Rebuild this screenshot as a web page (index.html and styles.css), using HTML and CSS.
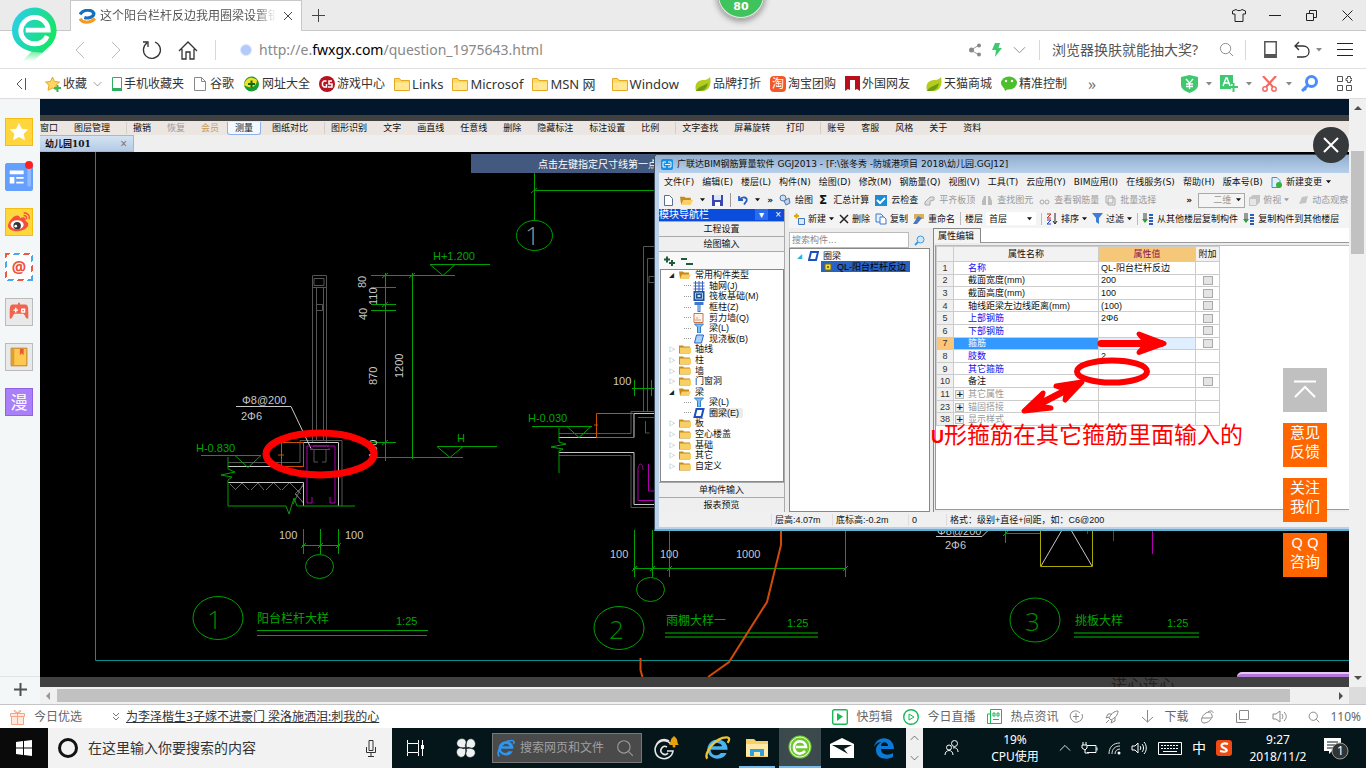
FILE: index.html
```html
<!DOCTYPE html>
<html lang="zh-CN">
<head>
    <meta charset="UTF-8">
    <meta name="viewport" content="width=device-width, initial-scale=1.0">
    <title>这个阳台栏杆反边我用圈梁设置钢筋</title>
    <link rel="stylesheet" href="styles.css">
</head>
<body>
    <!-- shared icons -->
    <svg class="defs" aria-hidden="true">
        <symbol id="i-caret" viewBox="0 0 6 4"><path d="M0 0h6L3 3.500z" fill="currentColor"/></symbol>
        <symbol id="i-chev" viewBox="0 0 14 8"><path d="M1 1l6 6 6-6" fill="none" stroke="currentColor"/></symbol>
        <symbol id="i-mag" viewBox="0 0 16 16"><circle cx="7" cy="7" r="5.500" fill="none" stroke="currentColor"/><path d="M11 11l4 4" stroke="currentColor"/></symbol>
        <symbol id="i-folder" viewBox="0 0 16 14"><path d="M.5 1.500h5l1.500 2h8.500v10H.5z" fill="#ffd75e" stroke="#e5a822"/><path d="M1 5.500h14v7.500H1z" fill="#ffe793"/></symbol>
        <symbol id="i-leaf" viewBox="0 0 16 16"><path d="M1 15C-1 7 3 4 9 4c3 0 5-2 6-3 2 9-2 14-8 14z" fill="#b5cc1e"/><path d="M1 15c3-5 8-5 12-8-1 6-5 8-9 8z" fill="#6b9c14"/></symbol>
        <symbol id="i-fold" viewBox="0 0 12 9"><path d="M0 1h4l1 1h6v7H0z" fill="#c98a1c"/><path d="M1 3h11v5.500H1z" fill="#f8cf63"/></symbol>
        <symbol id="i-foldopen" viewBox="0 0 12 9"><path d="M0 1h4l1 1h5v6H1z" fill="#c98a1c"/><path d="M3 4h9l-2 4.500H1z" fill="#f8d06a"/></symbol>
        <symbol id="i-grid" viewBox="0 0 11 10"><path d="M0 2h11M0 5h11M0 8h11M2 0v10M5.500 0v10M9 0v10" stroke="#3a62c0"/></symbol>
        <symbol id="i-raft" viewBox="0 0 11 10"><path d="M0 0h11v10H0z" fill="#1f4f96"/><path d="M2 2h7v6H2z" fill="none" stroke="#a9cdf5"/><path d="M4 4h3v2H4z" fill="#cfe6ff"/></symbol>
        <symbol id="i-col" viewBox="0 0 11 10"><path d="M1 0h9v3H7v7H4V3H1z" fill="#3d78cf"/><path d="M5 3h1v6H5z" fill="#bfe0ff"/></symbol>
        <symbol id="i-wall" viewBox="0 0 11 10"><path d="M.5.5h9v9h-9z" fill="#fff4ea" stroke="#c8754a"/><path d="M2 7h1M4 7h1M6 7h1M3 5h1" stroke="#a33"/></symbol>
        <symbol id="i-beam" viewBox="0 0 11 10"><path d="M1 1h9l-3 3v6H4V4z" fill="#7cc0f0" stroke="#2e7fd0"/></symbol>
        <symbol id="i-ring" viewBox="0 0 11 10"><path d="M3 1h7L8 9H1z" fill="#fff" stroke="#1d4fc0" stroke-width="2"/></symbol>
        <symbol id="i-slab" viewBox="0 0 11 10"><path d="M3 1h7L8 9H1z" fill="#a8d2fb" stroke="#2a62c8"/></symbol>
        <symbol id="i-copy" viewBox="0 0 12 12"><path d="M1 1h5l2 2v6H1z" fill="#e6f2ff" stroke="#3d78c8"/><path d="M5 4h4l2 2v5H5z" fill="#fff" stroke="#3d78c8"/></symbol>
        <symbol id="i-floor" viewBox="0 0 12 12"><path d="M1 0h4v7H1z" fill="#999"/><path d="M7 2h4M7 5h4M7 8h4M7 11h4" stroke="#2860c0" stroke-width="2"/><path d="M0 6h6l-3 4z" fill="#27a030"/></symbol>
        <symbol id="i-e" viewBox="0 0 24 24"><path d="M6 13h15c0-6-4-9-9-9-5 0-9 4-9 9 0 4 4 8 9 8 4 0 7-2 8-5h-5c-1 1-2 2-4 2-3 0-5-2-5-5zm0-3c1-2 3-3 5-3s5 1 5 3z" fill="currentColor"/></symbol>
    </svg>

    <header>
        <div class="titlebar">
            <div class="tab">
                <svg class="tab-ico" viewBox="0 0 16 14"><path d="M1 5C4 0 12 0 14 4c0 4-6 5-9 4" fill="none" stroke="#1470c0" stroke-width="3"/><path d="M1 9c2 4 9 5 14 0" fill="none" stroke="#f59a1e" stroke-width="3"/></svg>
                <span class="tab-title">这个阳台栏杆反边我用圈梁设置钢</span>
                <button class="plain tab-x" aria-label="关闭标签"><svg width="10" height="10" viewBox="0 0 10 10"><path d="M1 1l8 8M9 1L1 9" stroke="#444"/></svg></button>
            </div>
            <button class="plain newtab" aria-label="新标签"><svg width="13" height="13" viewBox="0 0 13 13"><path d="M6.500 0v13M0 6.500h13" stroke="#444"/></svg></button>
            <div class="winbtns">
                <button class="plain" aria-label="皮肤"><svg width="14" height="13" viewBox="0 0 14 13"><path d="M4 .5L.5 2v3H3v7.500h8V5h2.500V2L10 .5C9 2 5 2 4 .5z" fill="none" stroke="#222"/></svg></button>
                <button class="plain" aria-label="最小化"><svg width="12" height="12" viewBox="0 0 12 12"><path d="M0 6.500h12" stroke="#222"/></svg></button>
                <button class="plain" aria-label="还原"><svg width="11" height="11" viewBox="0 0 11 11"><path d="M.5 3.500h7v7h-7zM3.500 3V.5h7v7H8" fill="none" stroke="#222"/></svg></button>
                <button class="plain" aria-label="关闭"><svg width="11" height="11" viewBox="0 0 11 11"><path d="M.5.5l10 10M10.500.5l-10 10" stroke="#222"/></svg></button>
            </div>
        </div>

        <nav class="navbar">
            <button class="plain slot" aria-label="后退"><svg width="10" height="18" viewBox="0 0 10 18"><path d="M9 1L1 9l8 8" fill="none" stroke="#bbb"/></svg></button>
            <button class="plain slot" aria-label="前进"><svg width="10" height="18" viewBox="0 0 10 18"><path d="M1 1l8 8-8 8" fill="none" stroke="#bbb"/></svg></button>
            <button class="plain slot" aria-label="刷新"><svg width="20" height="20" viewBox="0 0 20 20"><path d="M5 3A8.500 8.500 0 1 0 13 2M1 2h5v5" fill="none" stroke="#333" stroke-width="1.300"/></svg></button>
            <button class="plain slot" aria-label="主页"><svg width="20" height="20" viewBox="0 0 20 20"><path d="M1 11l9-9 9 9M4 9v10h4v-7h4v7h4V9" fill="none" stroke="#333" stroke-width="1.300"/></svg></button>
            <i class="vsep"></i>
            <i class="site"></i>
            <span class="url">http://e.<b>fwxgx.com</b>/question_1975643.html</span>
            <div class="nav-right">
                <button class="plain s22" aria-label="分享"><svg width="12" height="14" viewBox="0 0 12 14"><path d="M10 2L2 7l8 5" fill="none" stroke="#999"/><circle cx="10" cy="2.500" r="2" fill="#888"/><circle cx="2.500" cy="7" r="2.500" fill="#888"/><circle cx="10" cy="11.500" r="2" fill="#888"/></svg></button>
                <button class="plain s22" aria-label="加速"><svg width="10" height="14" viewBox="0 0 10 14"><path d="M3 0h5L6.500 5H10L3 14l1-7H0z" fill="#3ec96f"/></svg></button>
                <button class="plain s22 gray" aria-label="更多"><svg width="13" height="8"><use href="#i-chev"/></svg></button>
                <i class="vsep"></i>
                <input class="hotsearch" type="text" value="浏览器换肤就能抽大奖?" aria-label="搜索">
                <button class="plain s28 gray" aria-label="搜索"><svg width="15" height="15"><use href="#i-mag"/></svg></button>
                <i class="vsep tight"></i>
                <button class="plain s36" aria-label="手机"><svg width="13" height="17" viewBox="0 0 13 17"><path d="M.8.8h11.400v15.400H.8z" fill="none" stroke="#555" stroke-width="1.500"/><path d="M1 13h11v3H1z" fill="#555"/></svg></button>
                <button class="plain s28" aria-label="撤销"><svg width="16" height="17" viewBox="0 0 16 17"><path d="M5 1L1 5l4 4M1 5h8c8 0 8 11 0 11H3" fill="none" stroke="#333" stroke-width="1.300"/></svg></button>
                <svg class="dd" width="6" height="4"><use href="#i-caret"/></svg>
                <button class="plain s36" aria-label="菜单"><svg width="16" height="13" viewBox="0 0 16 13"><path d="M0 .5h16M0 6.500h16M0 12.500h16" stroke="#222"/></svg></button>
            </div>
        </nav>

        <div class="bookmarks">
            <svg class="collapse" width="10" height="12" viewBox="0 0 10 12"><path d="M6 1L1 6l5 5M9.500 0v12" fill="none" stroke="#555"/></svg>
            <ul>
                <li class="fav"><a href="#"><svg width="16" height="16" viewBox="0 0 16 16"><path d="M7.500 1l2 4.500 5 .5-3.700 3.300 1 5L7.500 12 3 14.300l1-5L.5 6l5-.5z" fill="#ffd75e" stroke="#e5a822"/><path d="M9 12h7M12.500 9v7" stroke="#3cb85a" stroke-width="2"/></svg>收藏</a><svg class="dn" width="9" height="6"><use href="#i-chev"/></svg></li>
                <li><a href="#"><svg width="10" height="14" viewBox="0 0 10 14"><path d="M.5.5h9v13h-9z" fill="#fff" stroke="#2fae60"/><path d="M0 11h10v3H0z" fill="#2fae60"/></svg>手机收藏夹</a></li>
                <li><a href="#"><svg class="pg" width="12" height="14" viewBox="0 0 12 14"><path d="M.5.5h7l4 4v9H.5zM7.500.5v4h4" fill="#fff" stroke="#888"/></svg>谷歌</a></li>
                <li><a href="#"><svg width="17" height="16" viewBox="0 0 17 16"><circle cx="8.500" cy="8" r="7.500" fill="#1a9c34"/><path d="M1 9c2-8 8-9 13-5-1 8-6 9-13 5z" fill="#f2e028"/><path d="M5 8h7M8.500 4.500v7" stroke="#0c6a1c" stroke-width="2"/></svg>网址大全</a></li>
                <li><a href="#"><svg width="16" height="16" viewBox="0 0 16 16"><circle cx="8" cy="8" r="8" fill="#b6121f"/><path d="M7.500 5H5L3.500 6.500v3L5 11h2.500V8M13 5h-3v3h3v3h-4" fill="none" stroke="#fff" stroke-width="1.500"/></svg>游戏中心</a></li>
                <li class="en"><a href="#"><svg width="16" height="14"><use href="#i-folder"/></svg>Links</a></li>
                <li class="en"><a href="#"><svg width="16" height="14"><use href="#i-folder"/></svg>Microsof</a></li>
                <li class="en wide"><a href="#"><svg width="16" height="14"><use href="#i-folder"/></svg>MSN 网</a></li>
                <li class="en wide"><a href="#"><svg width="16" height="14"><use href="#i-folder"/></svg>Window</a></li>
                <li><a href="#"><svg width="16" height="16"><use href="#i-leaf"/></svg>品牌打折</a></li>
                <li><a href="#"><span class="tao">淘</span>淘宝团购</a></li>
                <li class="wide"><a href="#"><svg width="15" height="15" viewBox="0 0 15 15"><path d="M0 0h15v15l-3-2-2 1V4H5v10l-2-1-3 2z" fill="#b90f1c"/></svg>外国网友</a></li>
                <li><a href="#"><svg width="16" height="16"><use href="#i-leaf"/></svg>天猫商城</a></li>
                <li><a href="#"><svg width="16" height="15" viewBox="0 0 16 15"><ellipse cx="8" cy="7" rx="8" ry="6.500" fill="#4bbf2c"/><path d="M3 12l1 3 3-2z" fill="#4bbf2c"/><circle cx="5" cy="5" r="1.200" fill="#fff"/><circle cx="11" cy="5" r="1.200" fill="#fff"/></svg>精准控制</a></li>
            </ul>
            <span class="more">»</span>
            <div class="tools">
                <button class="plain s24" aria-label="网购先赔"><svg width="17" height="18" viewBox="0 0 17 18"><path d="M8.500 0L17 2v8c0 4-4 6-8.500 8C4 16 0 14 0 10V2z" fill="#3ec96f"/><path d="M5 4l3.500 4L12 4M8.500 8v6M5 9h7M5 11.500h7" fill="none" stroke="#fff" stroke-width="1.300"/></svg></button>
                <svg class="dd" width="6" height="4"><use href="#i-caret"/></svg>
                <button class="plain s24" aria-label="翻译"><svg width="18" height="17" viewBox="0 0 18 17"><path d="M0 0h13v9h-2v5H0z" fill="#3ec96f"/><path d="M3 11l3-8h1l3 8M4 8h5" fill="none" stroke="#fff" stroke-width="1.500"/><path d="M9 12h9M13.500 8v9" stroke="#3ec96f" stroke-width="2"/></svg></button>
                <svg class="dd" width="6" height="4"><use href="#i-caret"/></svg>
                <button class="plain s24" aria-label="截图"><svg width="15" height="16" viewBox="0 0 15 16"><path d="M1 0l10 11M14 0L4 11" stroke="#f8685f" stroke-width="2.200"/><circle cx="3" cy="13" r="2.200" fill="none" stroke="#f8685f" stroke-width="1.500"/><circle cx="12" cy="13" r="2.200" fill="none" stroke="#f8685f" stroke-width="1.500"/></svg></button>
                <svg class="dd" width="6" height="4"><use href="#i-caret"/></svg>
                <button class="plain s24" aria-label="登录管家"><svg width="17" height="17" viewBox="0 0 17 17"><circle cx="10.500" cy="6.500" r="5" fill="none" stroke="#4b8df8" stroke-width="3"/><path d="M7 10l-6 6M3 13l2 2" stroke="#4b8df8" stroke-width="3"/></svg></button>
                <button class="plain s36 last" aria-label="扩展"><svg width="15" height="15" viewBox="0 0 15 15"><path d="M.5.5h5v5h-5zM.5 9.500h5v5h-5zM9.500 9.500h5v5h-5z" fill="none" stroke="#555"/><path d="M10.500.5h3v2h1.500v2h-1.500v2h-3v-2H9v-2h1.500z" fill="none" stroke="#555"/></svg></button>
            </div>
        </div>

        <svg class="brand" viewBox="0 0 48 56">
            <defs>
                <linearGradient id="g1" x1="0" y1="0.300" x2="1" y2="0.700"><stop offset="0" stop-color="#2bd0e8"/><stop offset=".35" stop-color="#22d6b8"/><stop offset="1" stop-color="#14e85a"/></linearGradient>
                <linearGradient id="g2" x1="0" y1="0" x2="0" y2="1"><stop offset="0" stop-color="#10e060"/><stop offset="1" stop-color="#10e060" stop-opacity="0"/></linearGradient>
            </defs>
            <path d="M11 55l12-12 18-6-18 18z" fill="url(#g2)"/>
            <path d="M24 0a23 23 0 0 1 17 38l-9 8-11-1C8 42 1 34 1 23A23 23 0 0 1 24 0z" fill="url(#g1)"/>
            <path d="M37 29c-2 5-7 8-13 8-8 0-14-6-14-13s6-14 14-14 14 6 14 13H15" fill="none" stroke="#fff" stroke-width="5"/>
        </svg>
        <div class="score">80</div>
    </header>

    <main>
        <aside>
            <button class="app star" aria-label="收藏"><svg viewBox="0 0 28 28"><path d="M14 4l3 6.500 7 .8-5 4.700 1.500 7L14 19.500 7.500 23 9 16l-5-4.700 7-.8z" fill="#fff"/></svg></button>
            <button class="app news" aria-label="新闻"><svg viewBox="0 0 28 28"><path d="M4 7h15v4H4zM4 14h5v7H4zM11 14h8v2h-8zM11 19h8v2h-8z" fill="#fff"/><path d="M23 4h4v20h-4z" fill="#8fbaff"/></svg><i></i></button>
            <button class="app star" aria-label="微博"><svg viewBox="0 0 28 28"><path d="M12 7c2 0 3 1 3 3 4-2 7-1 6 3 6 2 3 10-8 11C5 24 0 20 3 15c2-4 6-8 9-8z" fill="#f4503a"/><ellipse cx="12" cy="17" rx="7" ry="5" fill="#fff"/><circle cx="12" cy="18" r="4" fill="#333"/><circle cx="10.500" cy="18.500" r="1.500" fill="#fff"/><path d="M19 4c4 0 7 3 6 7M19 7c2 0 4 1 3 4" fill="none" stroke="#f4503a" stroke-width="1.500"/></svg></button>
            <button class="app mail" aria-label="邮箱"><span>@</span></button>
            <button class="app tool" aria-label="游戏"><svg viewBox="0 0 28 28"><path d="M7 6h14c3 0 3 5 3 8v7c-3 1-3-3-5-5H9c-2 2-2 6-5 5v-7c0-3 0-8 3-8zM13 4h2v3h-2z" fill="#f0654f"/><path d="M8 12h5M10.500 9.500v5M17 11h3v3h-3z" fill="none" stroke="#fff" stroke-width="1.500"/></svg></button>
            <button class="app tool" aria-label="小说"><svg viewBox="0 0 28 28"><path d="M5.500 4.500h17v19h-17z" fill="#ffc84e" stroke="#b57d1c"/><path d="M6 5h3v18H6z" fill="#dba032"/><path d="M15 5h4v7l-2-2-2 2z" fill="#f0543a"/></svg></button>
            <button class="app manga" aria-label="漫画">漫</button>
            <button class="add" aria-label="添加"><svg width="13" height="13" viewBox="0 0 13 13"><path d="M6.500 0v13M0 6.500h13" stroke="#4b5256" stroke-width="2"/></svg></button>
        </aside>

        <section class="page">
            <div class="navy"></div>
            <div class="cad-menu">
                <a href="#">窗口</a><a href="#">图层管理</a><a href="#" class="sep">撤销</a><a href="#" class="off">恢复</a><a href="#" class="vip">会员</a><a href="#" class="on">测量</a><a href="#">图纸对比</a><a href="#" class="sep">图形识别</a><a href="#">文字</a><a href="#">画直线</a><a href="#">任意线</a><a href="#">删除</a><a href="#">隐藏标注</a><a href="#">标注设置</a><a href="#">比例</a><a href="#" class="sep">文字查找</a><a href="#">屏幕旋转</a><a href="#">打印</a><a href="#" class="sep">账号</a><a href="#">客服</a><a href="#">风格</a><a href="#">关于</a><a href="#">资料</a>
            </div>
            <div class="cad-tabs"><span class="cad-tab">幼儿园101 <i>×</i></span></div>

            <div class="canvas">
                <svg class="drawing" viewBox="40 152 1309 525" preserveAspectRatio="xMinYMin slice">
                    <g fill="none" stroke="#0a8f8f"><path d="M95.500 152V660.500H1349"/></g>
                    <!-- section 1: balcony rail -->
                    <g fill="none" stroke="#555">
                        <path d="M312.500 276v166M316.500 287v153M323.500 287v153M326.500 276v166M312.500 275.500h14M312.500 287.500h14M314 278.500h10v7h-10z"/>
                        <path d="M316.500 304.500h6v6h-6zM228 462.500h72V440.500h42V506M310 449.500h20M314 450v12h4M326 450v12h-4M313 446h16"/>
                        <path d="M230 484l5 5M235 490l8-8M241 482l8 8M251 490l8-8M257 482l7 8M266 490l8-8M273 482l8 8M282 490l8-8M289 482l12 12M303 486l-8 8 8 8M296 494l8 10M303 484l-10 20" stroke="#666"/>
                    </g>
                    <g fill="none" stroke="#c8c8c8">
                        <path d="M228 466.500h75M228 482.500h75.500V506M303.500 466.500v-24h35V506M236 406.500h55l20 42"/>
                    </g>
                    <g fill="none" stroke="#c85000"><path d="M281.500 442.500h22v24h-22zM278 455h6"/></g>
                    <g fill="none" stroke="#b000b0"><path d="M312 497v6h-5v-57h28v57h-5v-6M311 449h2M328 449h2"/></g>
                    <g fill="none" stroke="#00a000">
                        <path d="M430 264.500h60M430 264.500l13 11 12-11M371 275.500h84M371 287.500h25M371 304.500h25M371 310.500h25M371 442.500h25M371 457.500h92M385.500 273v188M412.500 273v186M437 446.500h60M437 446.500l13 11 13-11"/>
                        <path d="M201 455.500h60M235 455.500l13 12 13-12M228 457v12l7 3-14 3 11 2-4 3v26h58l3 8 5-16 3 8h58"/>
                        <path d="M303.500 529v25M320.500 529v25M338.500 529v25M302 545.500h38M382 278l6-5M382 307l6-5M382 445l6-5M409 278l6-5M301 548l5-5M318 548l5-5M336 548l5-5"/>
                        <ellipse cx="319.500" cy="566.500" rx="14" ry="12"/><ellipse cx="218" cy="618" rx="25" ry="21.500"/>
                        <path d="M257 630.500h171M257 635.500h170"/>
                    </g>
                    <!-- section 2: canopy -->
                    <g fill="none" stroke="#555"><path d="M654 246.500H643.500V412M654 258.500H647.500V412M654 276.500h-5v6h5M559 433.500h72V411.500h23M559 455.500h72V507.500h23M638 417.500h16M645.500 421v12h4"/></g>
                    <g fill="none" stroke="#c8c8c8"><path d="M559 437.500h75V413.500h20M559 452.500h75V504.500h20"/></g>
                    <g fill="none" stroke="#c85000"><path d="M596.500 413.500h37v24h-37zM594 425h4"/></g>
                    <g fill="none" stroke="#b000b0"><path d="M643 470c0-8-5-8-5 0v30.500h16M648.500 464v27h6"/></g>
                    <g fill="none" stroke="#00a000">
                        <path d="M534.500 173v47M534 190.500h120M531 193l6-5"/><ellipse cx="534.500" cy="235.500" rx="18" ry="15"/>
                        <path d="M634.500 380v16M651.500 380v16M632 388.500h22M532 426.500h60M567 426.500l12 11 12-11M559 428v14l7 2-15 3 12 2-4 2v22"/>
                        <path d="M634.500 530v47M652.500 530v47M669.500 530v47M845.500 530v47M633 568.500h213M632 571l5-5M650 571l5-5M667 571l5-5M843 571l5-5"/>
                        <ellipse cx="650.500" cy="589.500" rx="14" ry="12"/><ellipse cx="619" cy="628" rx="25" ry="21.500"/>
                    </g>
                    <g stroke="#006000" stroke-width="2"><path d="M665 633h153M665 637h153M1074 633h125M1074 637h125"/></g>
                    <!-- section 3 -->
                    <g fill="none" stroke="#00a000"><path d="M1005.500 530v13M1005 533.500h36M1003 536l5-5"/><ellipse cx="1035" cy="620" rx="25" ry="22"/></g>
                    <path d="M1040.500 530v36.500h52V530" fill="none" stroke="#a8a800"/>
                    <path d="M1041 566l21-36M1092 566l-21-36M936 536.500h46l6-6" fill="none" stroke="#c8c8c8"/>
                    <path d="M1113.500 530v11M1152.500 530v24M1087.500 530v4" stroke="#b000b0"/>
                    <path d="M781 530v15l-14 57-38 60-21 15M640.500 658v12l2 7" fill="none" stroke="#d24a08" stroke-width="2"/>

                    <g class="dim">
                        <text x="242" y="404">Φ8@200</text><text x="241" y="420">2Φ6</text>
                        <text x="279" y="539">100</text><text x="345" y="539">100</text>
                        <text x="613" y="385">100</text><text x="610" y="558">100</text><text x="660" y="558">100</text><text x="736" y="558">1000</text>
                        <text x="937" y="535">Φ8@200</text><text x="945" y="549">2Φ6</text>
                        <text transform="translate(366 288) rotate(-90)">80</text>
                        <text transform="translate(377 305) rotate(-90)">110</text>
                        <text transform="translate(367 320) rotate(-90)">40</text>
                        <text transform="translate(377 385) rotate(-90)">870</text>
                        <text transform="translate(403 378) rotate(-90)">1200</text>
                        <text transform="translate(377 458) rotate(-90)">100</text>
                    </g>
                    <g class="dim lvl">
                        <text x="433" y="260">H+1.200</text><text x="457" y="442">H</text><text x="196" y="452">H-0.830</text><text x="528" y="422">H-0.030</text>
                        <text x="396" y="625">1:25</text><text x="787" y="627">1:25</text><text x="1167" y="627">1:25</text>
                    </g>
                    <g class="cap"><text x="257" y="623">阳台栏杆大样</text><text x="666" y="625">雨棚大样一</text><text x="1075" y="625">挑板大样</text></g>
                    <g class="num"><text x="207" y="629">1</text><text x="609" y="639">2</text><text x="1025" y="631">3</text><text x="525" y="245" class="axis">1</text></g>
                </svg>
                <div class="tip">点击左键指定尺寸线第一点</div>

                <div class="win">
                    <div class="win-title"><svg width="12" height="11" viewBox="0 0 12 11"><rect width="12" height="11" rx="2" fill="#1490e8"/><path d="M5 3H2v5h3M7 3h3v5H7M4 5.500h5" fill="none" stroke="#fff"/></svg>广联达BIM钢筋算量软件 GGJ2013 - [F:\张冬秀 -防城港项目 2018\幼儿园.GGJ12]</div>
                    <div class="win-menu">
                        <span>文件(F)</span><span>编辑(E)</span><span>楼层(L)</span><span>构件(N)</span><span>绘图(D)</span><span>修改(M)</span><span>钢筋量(Q)</span><span>视图(V)</span><span>工具(T)</span><span>云应用(Y)</span><span>BIM应用(I)</span><span>在线服务(S)</span><span>帮助(H)</span><span>版本号(B)</span>
                        <span class="ib"><svg width="11" height="11" viewBox="0 0 11 11"><path d="M1 .5h5l3 3v7H1z" fill="#dff0ff" stroke="#4a90d0"/><circle cx="8" cy="8" r="3" fill="#3ab03a"/></svg>新建变更<svg width="5" height="4"><use href="#i-caret"/></svg></span>
                    </div>
                    <div class="win-bar">
                        <div class="file-tools">
                            <svg width="9" height="11" viewBox="0 0 9 11"><path d="M.5.5h5l3 3v7h-8z" fill="#fff" stroke="#5a6e90"/></svg>
                            <svg width="13" height="11"><use href="#i-foldopen"/></svg>
                            <svg width="5" height="4"><use href="#i-caret"/></svg>
                            <svg width="11" height="11" viewBox="0 0 11 11"><path d="M0 0h11v11H0z" fill="#3a48b0"/><path d="M2 0h7v5H2z" fill="#dde6ff"/><path d="M3 7h5v4H3z" fill="#fff"/></svg>
                            <i></i>
                            <svg width="10" height="10" viewBox="0 0 10 10"><path d="M1 1v4h4M1.500 5C4 1 10 2 8.500 6L6 9.500" fill="none" stroke="#2a5cc0" stroke-width="1.800"/></svg>
                            <svg width="5" height="4"><use href="#i-caret"/></svg>
                            <b>»</b>
                        </div>
                        <span class="ib"><svg width="12" height="12" viewBox="0 0 12 12"><circle cx="4" cy="4" r="3" fill="#cfe0f4" stroke="#5078a8"/><path d="M5 7l5-3 1 5-4 2z" fill="#bcd2ea" stroke="#5078a8"/></svg>绘图</span>
                        <span class="ib"><em>Σ</em>汇总计算</span>
                        <span class="ib"><svg width="12" height="11" viewBox="0 0 12 11"><path d="M0 0h12v11H0z" fill="#1c8cd4"/><path d="M2 5l3 3 5-5" fill="none" stroke="#fff" stroke-width="2"/></svg>云检查</span>
                        <span class="ib off"><svg width="11" height="11" viewBox="0 0 11 11"><path d="M1 10V7l5-5h4v3L6 6v4z" fill="#ddd" stroke="#aaa"/></svg>平齐板顶</span>
                        <span class="ib off"><svg width="12" height="11" viewBox="0 0 12 11"><path d="M1 10V6l2-5h2v9zM7 10V1h2l2 5v4z" fill="#bbb"/></svg>查找图元</span>
                        <span class="ib off"><svg width="11" height="11" viewBox="0 0 11 11"><circle cx="3" cy="7" r="2" fill="none" stroke="#aaa"/><circle cx="8" cy="7" r="2" fill="none" stroke="#aaa"/></svg>查看钢筋量</span>
                        <span class="ib off"><svg width="11" height="11" viewBox="0 0 11 11"><path d="M1 1h7v7H1zM3 3h7v7H3z" fill="none" stroke="#aaa"/></svg>批量选择</span>
                        <b class="more2">»</b>
                        <span class="pick"><select class="view" aria-label="视图"><option>二维</option></select><svg width="5" height="4"><use href="#i-caret"/></svg></span>
                        <span class="ib off cube"><svg width="11" height="11" viewBox="0 0 11 11"><path d="M0 3l4-3h7v7l-4 4H0z" fill="#c4c4c4"/><path d="M1 4h6v6H1z" fill="#e6e6e6"/></svg>俯视<svg width="5" height="4"><use href="#i-caret"/></svg></span>
                        <span class="ib off cube"><svg width="11" height="11" viewBox="0 0 11 11"><path d="M1 9L4 2l6-1-2 7z" fill="#c4c4c4"/></svg>动态观察</span>
                    </div>

                    <div class="win-body">
                        <div class="navpane">
                            <div class="pane-head">模块导航栏<span><i>▾</i> ×</span></div>
                            <button>工程设置</button>
                            <button>绘图输入</button>
                            <div class="pm"><svg width="32" height="10" viewBox="0 0 32 10"><path d="M1 3.500h6M4 .5v6M6 7h6M9 4v6M18 3h6M23 8h7" stroke="#1f5a3a" stroke-width="2"/></svg></div>
                            <ul class="tree">
                                <li class="open"><svg><use href="#i-foldopen"/></svg>常用构件类型</li>
                                <li class="sub"><svg><use href="#i-grid"/></svg>轴网(J)</li>
                                <li class="sub"><svg><use href="#i-raft"/></svg>筏板基础(M)</li>
                                <li class="sub"><svg><use href="#i-col"/></svg>框柱(Z)</li>
                                <li class="sub"><svg><use href="#i-wall"/></svg>剪力墙(Q)</li>
                                <li class="sub"><svg><use href="#i-beam"/></svg>梁(L)</li>
                                <li class="sub"><svg><use href="#i-slab"/></svg>现浇板(B)</li>
                                <li><svg><use href="#i-fold"/></svg>轴线</li>
                                <li><svg><use href="#i-fold"/></svg>柱</li>
                                <li><svg><use href="#i-fold"/></svg>墙</li>
                                <li><svg><use href="#i-fold"/></svg>门窗洞</li>
                                <li class="open"><svg><use href="#i-foldopen"/></svg>梁</li>
                                <li class="sub"><svg><use href="#i-beam"/></svg>梁(L)</li>
                                <li class="sub"><svg><use href="#i-ring"/></svg><mark>圈梁(E)</mark></li>
                                <li><svg><use href="#i-fold"/></svg>板</li>
                                <li><svg><use href="#i-fold"/></svg>空心楼盖</li>
                                <li><svg><use href="#i-fold"/></svg>基础</li>
                                <li><svg><use href="#i-fold"/></svg>其它</li>
                                <li><svg><use href="#i-fold"/></svg>自定义</li>
                            </ul>
                            <button>单构件输入</button>
                            <button>报表预览</button>
                        </div>

                        <div class="work">
                            <div class="work-bar">
                                <span class="ib"><svg width="12" height="12" viewBox="0 0 12 12"><path d="M1 3h5M3.500.5v5" stroke="#e0a800" stroke-width="2"/><path d="M5.500 5.500h6v6h-6z" fill="#d8eaff" stroke="#3d78c8"/></svg>新建<svg width="5" height="4"><use href="#i-caret"/></svg></span>
                                <span class="ib"><svg width="10" height="10" viewBox="0 0 10 10"><path d="M1 1l8 8M9 1L1 9" stroke="#222" stroke-width="1.500"/></svg>删除</span>
                                <span class="ib"><svg width="12" height="12"><use href="#i-copy"/></svg>复制</span>
                                <span class="ib"><svg width="12" height="12" viewBox="0 0 12 12"><path d="M1 1h10v5H1z" fill="#d8b060"/><path d="M0 11l5-8 4 2-5 6z" fill="#4a78c0"/></svg>重命名</span>
                                <span class="ib bl">楼层<span class="pick"><select class="floor" aria-label="楼层"><option>首层</option></select><svg width="5" height="4"><use href="#i-caret"/></svg></span></span>
                                <span class="ib bl"><svg width="12" height="12" viewBox="0 0 12 12"><path d="M1 1h4L1 5h4" fill="none" stroke="#c02828"/><path d="M1 7h4L1 11h4" fill="none" stroke="#2040c0"/><path d="M9 0v10M7 8l2 3 2-3" fill="none" stroke="#222"/></svg>排序<svg width="5" height="4"><use href="#i-caret"/></svg></span>
                                <span class="ib"><svg width="11" height="11" viewBox="0 0 11 11"><path d="M0 0h11L7 5v6L4 9V5z" fill="#3a80d8"/></svg>过滤<svg width="5" height="4"><use href="#i-caret"/></svg></span>
                                <span class="ib bl"><svg width="12" height="12"><use href="#i-floor"/></svg>从其他楼层复制构件</span>
                                <span class="ib"><svg width="12" height="12"><use href="#i-floor"/></svg>复制构件到其他楼层</span>
                            </div>
                            <div class="cols">
                                <div class="parts">
                                    <div class="find"><input type="text" placeholder="搜索构件..." aria-label="搜索构件"><button class="plain" aria-label="查找"><svg width="11" height="11" viewBox="0 0 11 11"><circle cx="6.500" cy="4.500" r="3.500" fill="#cfe9fb" stroke="#3f9be0"/><path d="M4 7l-3 3" stroke="#3f9be0" stroke-width="2"/></svg></button></div>
                                    <ul class="parts-tree">
                                        <li><svg width="11" height="10"><use href="#i-ring"/></svg>圈梁</li>
                                        <li class="sel"><svg width="8" height="8" viewBox="0 0 8 8"><path d="M1 1h6v6H1z" fill="#f0e030" stroke="#806c00"/><path d="M3 3h2v2H3z" fill="#806c00"/></svg>QL-阳台栏杆反边</li>
                                    </ul>
                                </div>
                                <div class="props">
                                    <div class="props-tab"><span>属性编辑</span></div>
                                    <div class="props-body">
                                        <table>
                                            <thead><tr><th class="n"></th><th class="k">属性名称</th><th class="v">属性值</th><th class="c">附加</th></tr></thead>
                                            <tbody>
                                                <tr class="blue"><td>1</td><td>名称</td><td>QL-阳台栏杆反边</td><td></td></tr>
                                                <tr><td>2</td><td>截面宽度(mm)</td><td>200</td><td><input type="checkbox" aria-label="截面宽度"></td></tr>
                                                <tr><td>3</td><td>截面高度(mm)</td><td>100</td><td><input type="checkbox" aria-label="截面高度"></td></tr>
                                                <tr><td>4</td><td>轴线距梁左边线距离(mm)</td><td>(100)</td><td><input type="checkbox" aria-label="轴线距梁左边线距离"></td></tr>
                                                <tr class="blue"><td>5</td><td>上部钢筋</td><td>2Φ6</td><td><input type="checkbox" aria-label="上部钢筋"></td></tr>
                                                <tr class="blue"><td>6</td><td>下部钢筋</td><td></td><td><input type="checkbox" aria-label="下部钢筋"></td></tr>
                                                <tr class="cur"><td>7</td><td>箍筋</td><td></td><td><input type="checkbox" aria-label="箍筋"></td></tr>
                                                <tr class="blue"><td>8</td><td>肢数</td><td>2</td><td></td></tr>
                                                <tr class="blue"><td>9</td><td>其它箍筋</td><td></td><td></td></tr>
                                                <tr><td>10</td><td>备注</td><td></td><td><input type="checkbox" aria-label="备注"></td></tr>
                                                <tr class="grp"><td>11</td><td><i>+</i>其它属性</td><td></td><td></td></tr>
                                                <tr class="grp"><td>23</td><td><i>+</i>锚固搭接</td><td></td><td></td></tr>
                                                <tr class="grp"><td>38</td><td><i>+</i>显示样式</td><td></td><td></td></tr>
                                            </tbody>
                                        </table>
                                    </div>
                                </div>
                            </div>
                        </div>
                    </div>
                    <div class="win-status"><span class="s1"></span><span class="s2">层高:4.07m</span><span class="s3">底标高:-0.2m</span><span class="s4">0</span><span>格式：级别+直径+间距，如：C6@200</span></div>
                </div>

                <!-- red pen marks -->
                <svg class="marks" viewBox="40 152 1309 525" preserveAspectRatio="xMinYMin slice">
                    <g fill="none" stroke="#f00" stroke-width="7" stroke-linecap="round" stroke-linejoin="round">
                        <ellipse cx="320" cy="454" rx="54" ry="21"/>
                        <path d="M1101 343.500h60"/>
                        <ellipse cx="1112" cy="371.500" rx="35" ry="11" stroke-width="6"/>
                        <path d="M1076 385l-44 23"/>
                    </g>
                    <g fill="#f00" stroke="#f00" stroke-width="5" stroke-linejoin="round">
                        <path d="M1139 334l25 9.500-25 9 8-9zM1043 393l-19 18 27-3-12-2zM1056 386l26-4-17 18 2-10z"/>
                    </g>
                    <text x="931" y="443"><tspan class="u">U</tspan>形箍筋在其它箍筋里面输入的</text>
                </svg>
            </div>
            <div class="under"><span>诺心连心</span></div>
            <i class="promo"></i>

            <button class="close" aria-label="关闭图片"><svg width="18" height="18" viewBox="0 0 18 18"><path d="M2 2l14 14M16 2L2 16" stroke="#fff" stroke-width="2"/></svg></button>
            <div class="float">
                <a class="up" href="#" aria-label="返回顶部"><svg width="24" height="18" viewBox="0 0 24 18"><path d="M1 1.500h22M2 17L12 7l10 10" fill="none" stroke="#fff" stroke-width="2"/></svg></a>
                <a href="#">意见<br>反馈</a>
                <a href="#">关注<br>我们</a>
                <a href="#">Q Q<br>咨询</a>
            </div>
        </section>

        <div class="vbar"><i class="a up"></i><b></b><i class="a down"></i></div>
        <div class="hbar"><i class="a left"></i><b></b><i class="a right"></i></div>
        <div class="corner"></div>
    </main>

    <footer class="status">
        <svg width="15" height="16" viewBox="0 0 15 16"><path d="M.5 4.500h14v3H.5zM1.500 7.500h12v8h-12zM7.500 5v10M7.500 4C2 3 4-1 7.500 4 11-1 13 3 7.500 4" fill="#ffeae0" stroke="#f6a582"/></svg>
        <span class="today">今日优选</span>
        <svg class="dbl" width="8" height="10" viewBox="0 0 8 10"><path d="M1 1l3 3 3-3M1 5l3 3 3-3" fill="none" stroke="#777"/></svg>
        <a href="#">为李泽楷生3子嫁不进豪门 梁洛施洒泪:刺我的心</a>
        <div class="st-right">
            <button class="plain g"><svg width="16" height="16" viewBox="0 0 16 16"><rect x=".7" y=".7" width="14.600" height="14.600" rx="1.500" fill="none" stroke="#19b955" stroke-width="1.400"/><path d="M5 4l6 3.500L5 12z" fill="#19b955"/></svg>快剪辑</button>
            <button class="plain g"><svg width="16" height="16" viewBox="0 0 16 16"><circle cx="8" cy="8" r="7.300" fill="none" stroke="#19b955" stroke-width="1.400"/><path d="M6 5l5 3-5 3z" fill="none" stroke="#19b955"/></svg>今日直播</button>
            <button class="plain g"><svg width="15" height="15" viewBox="0 0 15 15"><path d="M3.500.5h11v14H.5V5h3zM3.500 5v9M6 4h2v3H6zM10 4h2v3h-2zM6 10.500h6" fill="none" stroke="#19b955"/></svg>热点资讯</button>
            <button class="plain k" aria-label="加速"><svg width="14" height="14" viewBox="0 0 14 14"><path d="M13 4A6 6 0 1 1 3 2c3-2 6-1 8 1M7 3v7M4 6.500h6" fill="none" stroke="#888"/></svg></button>
            <button class="plain k" aria-label="火箭"><svg width="14" height="14" viewBox="0 0 14 14"><path d="M13 1c-4 0-7 3-9 7l2 2c4-2 7-5 7-9zM4 7L1 8l2-4h4M7 10l-1 3 4-2V7M1 13l3-3" fill="none" stroke="#888"/></svg></button>
            <button class="plain k dl"><svg width="13" height="13" viewBox="0 0 13 13"><path d="M6.500 0v12M1 7l5.500 5L12 7" fill="none" stroke="#888"/></svg>下载</button>
            <button class="plain k" aria-label="内核"><svg width="14" height="14" viewBox="0 0 14 14"><path d="M2 8h10c1-5-3-7-6-5-5 3-6 10-2 10 3 0 6-2 7-4M8 2c3-2 5-1 5 1" fill="none" stroke="#888"/></svg></button>
            <button class="plain k" aria-label="窗口"><svg width="13" height="13" viewBox="0 0 13 13"><path d="M3.500.5h9v9h-9zM.5 3v9.500H10" fill="none" stroke="#888"/></svg></button>
            <button class="plain k" aria-label="声音"><svg width="16" height="13" viewBox="0 0 16 13"><path d="M1 4v5h3l4 3V1L4 4zM10 4c1 2 1 3 0 5M12 2c3 3 3 6 0 9" fill="none" stroke="#888"/></svg></button>
            <button class="plain k z"><svg width="12" height="12"><use href="#i-mag"/></svg>110%</button>
        </div>
    </footer>

    <div class="taskbar">
        <button class="plain start" aria-label="开始"><svg width="16" height="16" viewBox="0 0 16 16"><path d="M0 2l7-1v6.500H0zM8 1l8-1v7.500H8zM0 8.500h7V15l-7-1zM8 8.500h8V16l-8-1z" fill="#fff"/></svg></button>
        <div class="cortana"><i></i><input type="text" placeholder="在这里输入你要搜索的内容" aria-label="搜索"><svg width="12" height="17" viewBox="0 0 12 17"><path d="M4 .5h4v10H4zM1.500 7v5.500h9V7M6 13v3.500M3 16.500h6" fill="none" stroke="#333"/></svg></div>
        <button class="plain t48" aria-label="任务视图"><svg width="18" height="16" viewBox="0 0 18 16"><path d="M.5 3.500h11v9H.5zM.5 0v3M11.500 0v3M.5 13v3M11.500 13v3M15.500 0v16" fill="none" stroke="#fff"/><path d="M14 5h3v4h-3z" fill="#fff"/></svg></button>
        <button class="plain t52" aria-label="风车"><svg width="22" height="22" viewBox="0 0 24 24"><path d="M12 11C8 13 1 11 2 6c1-5 9-6 10-1 1 2-2 4 0 6zM13 12c-2-4 0-11 5-10 5 1 6 9 1 10-2 1-4-2-6 0zM12 13c4-2 11 0 10 5-1 5-9 6-10 1-1-2 2-4 0-6zM11 12c2 4 0 11-5 10-5-1-6-9-1-10 2-1 4 2 6 0z" fill="#eef2f2" stroke="#04161a" stroke-width=".6"/></svg></button>
        <div class="iesearch"><svg class="ieb" width="20" height="20" viewBox="0 0 24 24"><use href="#i-e"/><path d="M4 22C-1 17 9 3 19 3c3 0 3 2 2 4" fill="none" stroke="#2e96f0" stroke-width="2"/></svg><input type="text" placeholder="搜索网页和文件" aria-label="搜索网页和文件"><svg class="m" width="18" height="18"><use href="#i-mag"/></svg></div>
        <button class="plain t50" aria-label="提醒"><svg width="28" height="26" viewBox="0 0 28 26"><path d="M18 9A9 9 0 1 0 20 16h-6M14 12a4 4 0 1 0 1 6M16 6c-5-3-11-1-13 5" fill="none" stroke="#e8e8e8" stroke-width="1.600"/><path d="M16 10c2-1 1-5 3-7l2-2 2 2c2 2 1 6 3 7z" fill="#e8a20c"/><circle cx="21" cy="11" r="1.500" fill="#e8a20c"/></svg></button>
        <button class="plain t50" aria-label="Internet Explorer"><svg class="ie" width="27" height="27" viewBox="0 0 24 24"><use href="#i-e"/><path d="M3 21C-1 17 10 2 20 2c3 0 3 2 1 5" fill="none" stroke="#f4c430" stroke-width="2"/></svg></button>
        <button class="plain t36 run" aria-label="文件资源管理器"><svg width="22" height="19" viewBox="0 0 22 19"><path d="M0 1h8l2 2h12v16H0z" fill="#f5cf6b"/><path d="M0 6h22v12H0z" fill="#ffe9a6"/><path d="M4 18v-7h14v7h-4v-4H8v4z" fill="#2f9fe0"/></svg></button>
        <button class="plain t42 act" aria-label="360浏览器"><svg width="24" height="24" viewBox="0 0 24 24"><circle cx="12" cy="12" r="11.500" fill="#6cc82c"/><circle cx="12" cy="12" r="10" fill="none" stroke="#eaffdc"/><path d="M17 16c-5 5-11 2-11-4 0-7 11-8 12 0H8" fill="none" stroke="#fff" stroke-width="2.600"/></svg></button>
        <button class="plain t42" aria-label="邮件"><svg width="24" height="20" viewBox="0 0 24 20"><path d="M0 6l12-6 12 6v14H0z" fill="#fff"/><path d="M2 7h20l-8 4 4 5-7-4z" fill="#0b1a1e"/></svg></button>
        <button class="plain t42 edge" aria-label="Edge"><svg width="24" height="24" viewBox="0 0 24 24"><path d="M2 11C4-1 22-1 22 13H9c0 6 7 7 12 4v4C13 25 4 22 4 14c0-4 3-7 6-8-5 0-7 3-8 5zm7-1h7c0-5-7-5-7 0z" fill="currentColor"/></svg></button>
        <div class="tscroll"><svg width="9" height="6"><use href="#i-chev"/></svg><svg width="9" height="6"><use href="#i-chev"/></svg></div>
        <div class="tray">
            <button class="plain people" aria-label="人脉"><svg width="15" height="16" viewBox="0 0 15 16"><circle cx="10.500" cy="3.500" r="3" fill="none" stroke="#fff"/><circle cx="5" cy="7.500" r="2.500" fill="none" stroke="#fff"/><path d="M1 15c0-6 8-6 8 0M9 8c3-1 5 1 5 4" fill="none" stroke="#fff"/></svg></button>
            <div class="two cpu">19%<br>CPU使用</div>
            <svg class="rise" width="12" height="8"><use href="#i-chev"/></svg>
            <svg width="17" height="14" viewBox="0 0 17 14"><path d="M6 4.500h9v7H6M16 6.500v3M1 4h5v3l-2 2-3-2zM2 1v3M5 1v3M4 9v3h4" fill="none" stroke="#fff"/></svg>
            <svg width="13" height="13" viewBox="0 0 13 13"><path d="M1 12C1 5 5 1 12 1M4 12c0-5 3-8 8-8M7 12c0-3 2-5 5-5" fill="none" stroke="#ddd"/><circle cx="11" cy="11" r="1.500" fill="#fff"/></svg>
            <svg width="17" height="14" viewBox="0 0 17 14"><path d="M1 5v4h3l3 3V2L4 5zM9 5c1 1 1 3 0 4M11 3c2 2 2 6 0 8M13 1c3 3 3 9 0 12" fill="none" stroke="#fff"/></svg>
            <svg width="24" height="13" viewBox="0 0 24 13"><path d="M.5.5h23v12H.5z" fill="none" stroke="#fff"/><path d="M3 3.500h18M3 6.500h18" stroke="#fff" stroke-dasharray="2 1"/><path d="M5 9.500h14" stroke="#fff"/></svg>
            <span class="ime">中</span>
            <svg width="17" height="16" viewBox="0 0 17 16"><rect width="16" height="16" rx="3" fill="#f04a14"/><path d="M12 4C6 2 3 6 8 8s3 5-4 3" fill="none" stroke="#fff" stroke-width="2.200"/></svg>
            <div class="two clock">9:27<br>2018/11/2</div>
            <button class="plain note" aria-label="通知"><svg width="26" height="24" viewBox="0 0 26 24"><path d="M1 2h17v13h-9l-3 3v-3H1z" fill="#fff"/><path d="M4 6h11M4 9h11M4 12h8" stroke="#0b1a1e"/><circle cx="17" cy="15" r="8" fill="#333" stroke="#999"/></svg><span>1</span></button>
        </div>
    </div>
</body>
</html>
```
FILE: styles.css
```css
* {
    box-sizing: border-box;
}
body {
    margin: 0;
    height: 100vh;
    display: flex;
    flex-direction: column;
    overflow: hidden;
    font: 12px/16px "Noto Sans", "Noto Sans CJK SC", sans-serif;
    color: #333;
    background: #fff;
}
ul {
    list-style: none;
    margin: 0;
    padding: 0;
}
a {
    color: inherit;
    text-decoration: none;
}
svg {
    flex: none;
}
.defs {
    position: absolute;
    width: 0;
    height: 0;
}
.plain {
    border: 0;
    padding: 0;
    background: none;
    font: inherit;
    color: inherit;
    display: flex;
    align-items: center;
    justify-content: center;
    flex: none;
}
.gray { color: #888; }
.s22 { width: 22px; }
.s24 { width: 24px; }
.s28 { width: 28px; }
.s36 { width: 36px; }

/* browser chrome */
header {
    position: relative;
    flex: none;
}
.titlebar {
    height: 31px;
    display: flex;
    background: #ebebeb;
    border-bottom: 1px solid #c8c8c8;
    padding-left: 70px;
}
.tab {
    width: 232px;
    height: 31px;
    background: #fff;
    border: 1px solid #c8c8c8;
    border-bottom: 0;
    display: flex;
    align-items: center;
    padding: 0 8px;
}
.tab-ico {
    width: 17px;
    height: 15px;
    margin-right: 4px;
}
.tab-title {
    width: 176px;
    overflow: hidden;
    white-space: nowrap;
    color: #555;
    -webkit-mask-image: linear-gradient(to right, #000 88%, transparent);
    mask-image: linear-gradient(to right, #000 88%, transparent);
}
.tab-x {
    margin-left: 7px;
}
.newtab {
    margin-left: 10px;
}
.winbtns {
    margin-left: auto;
    display: flex;
    padding-right: 1px;
}
.winbtns .plain {
    width: 36px;
}
.navbar {
    height: 38px;
    display: flex;
    align-items: center;
    padding-left: 62px;
    border-bottom: 1px solid #e0e0e0;
}
.slot {
    width: 36px;
}
.vsep {
    width: 1px;
    height: 20px;
    background: #d8d8d8;
    margin: 0 12px 0 9px;
}
.vsep.tight {
    margin: 0 6px 0 5px;
}
.site {
    width: 12px;
    height: 12px;
    border-radius: 50%;
    background: #b3cbfa;
    border: 1px solid #dce8ff;
    margin: 0 7px 0 12px;
}
.url {
    font-size: 14px;
    color: #888;
}
.url b {
    font-weight: normal;
    color: #000;
}
.nav-right {
    margin-left: auto;
    display: flex;
    align-items: center;
    padding-right: 3px;
}
.hotsearch {
    width: 160px;
    border: 0;
    padding: 0;
    font: 14px/20px "Noto Sans", "Noto Sans CJK SC", sans-serif;
    color: #555;
}
.dd {
    color: #888;
    margin: 0 5px;
}
.nav-right .dd {
    margin: 0 5px 0 0;
}
.bookmarks {
    height: 30px;
    display: flex;
    align-items: center;
    border-bottom: 1px solid #ddd;
}
.collapse {
    margin: 0 19px 0 16px;
}
.bookmarks ul {
    display: flex;
    gap: 9px;
}
.bookmarks li,
.bookmarks li a {
    display: flex;
    align-items: center;
    gap: 2px;
    white-space: nowrap;
}
.fav .dn {
    color: #666;
    margin: 0 1px 0 4px;
}
.bookmarks .pg {
    margin: 0 2px 0 1px;
}
.bookmarks .en {
    font-size: 13px;
}
.bookmarks .wide {
    margin-right: 7px;
}
.tao {
    width: 16px;
    height: 16px;
    border-radius: 4px;
    background: #f4582a;
    color: #fff;
    text-align: center;
}
.more {
    margin-left: 21px;
    font-size: 16px;
    color: #777;
}
.tools {
    margin-left: auto;
    display: flex;
    align-items: center;
}
.tools .last {
    margin: 0 4px 0 5px;
}
.brand {
    position: absolute;
    left: 11px;
    top: 7px;
    width: 47px;
    height: 56px;
}
.score {
    position: absolute;
    left: 717px;
    top: -29px;
    width: 48px;
    height: 48px;
    border-radius: 50%;
    background: #3fc35c;
    border: 2px solid #e8e8e8;
    outline: 1px solid #aaa;
    outline-offset: -1px;
    box-shadow: 0 2px 6px rgba(0, 0, 0, .4);
    color: #fff;
    font: bold 11px/14px "DejaVu Sans", sans-serif;
    text-align: center;
    padding-top: 27px;
}

/* middle area */
main {
    flex: 1;
    min-height: 0;
    display: grid;
    grid-template: minmax(0, 1fr) 17px / 40px minmax(0, 1fr) 17px;
}
aside {
    grid-row: 1 / 3;
    background: #f4f7f7;
    display: flex;
    flex-direction: column;
    align-items: center;
    gap: 17px;
    padding: 19px 2px 0 0;
}
.app {
    position: relative;
    width: 28px;
    height: 28px;
    padding: 0;
    flex: none;
    border: 1px solid #ccc;
}
.app svg {
    display: block;
    width: 26px;
    height: 26px;
}
.app.star {
    background: #ffd63c;
    border-color: #f5bc14;
}
.app.news {
    background: #65a0ff;
    border-color: #65a0ff;
    border-radius: 2px;
}
.app.news i {
    position: absolute;
    right: -1px;
    top: -3px;
    width: 8px;
    height: 8px;
    border-radius: 50%;
    background: #ff2020;
}
.app.mail {
    border: 0;
    padding: 2px;
    background: repeating-linear-gradient(135deg, #f0583f 0 4px, #fff 4px 7px, #4aa8f0 7px 11px, #fff 11px 14px);
}
.app.mail span {
    display: block;
    background: #fff;
    color: #f0503a;
    font: bold 16px/24px "Noto Sans", sans-serif;
}
.app.tool {
    background: #e9e9e9;
    border-color: #bbb;
}
.app.manga {
    background: #aa80fa;
    border-color: #8f62e8;
    color: #fff;
    font: 17px/24px "Noto Sans CJK SC", sans-serif;
}
.add {
    align-self: stretch;
    height: 28px;
    margin: auto -2px 0 0;
    border: 0;
    border-top: 1px solid #e0e4e4;
    background: none;
}
.page {
    position: relative;
    overflow: hidden;
    display: flex;
    flex-direction: column;
    background: #404040;
}
.navy {
    height: 22px;
    flex: none;
    background: #02172c;
    border-bottom: 6px solid #404040;
}
.cad-menu {
    height: 14px;
    flex: none;
    background: #ece6e2;
    display: flex;
    align-items: center;
    gap: 16px;
    font: 9px/12px "Noto Sans CJK SC", sans-serif;
    color: #111;
    white-space: nowrap;
}
.cad-menu a {
    flex: none;
}
.cad-menu .sep {
    border-left: 1px solid #d4cec8;
    padding-left: 6px;
}
.cad-menu .off { color: #999; }
.cad-menu .vip { color: #c89a50; }
.cad-menu .on {
    padding: 0 7px;
    margin: 0 -5px 0 -8px;
    background: #f4f8ff;
    border: 1px solid #8fb0e8;
    border-top: 0;
    border-radius: 0 0 3px 3px;
}
.cad-tabs {
    height: 17px;
    flex: none;
    background: #efefef;
    display: flex;
}
.cad-tab {
    width: 94px;
    display: flex;
    justify-content: space-between;
    padding: 0 6px 0 5px;
    background: linear-gradient(#d4e2f2, #b4cbe6);
    border: 1px solid #a4b8d4;
    border-left: 0;
    font: bold 9px/16px "DejaVu Serif", "Noto Sans CJK SC", sans-serif;
    color: #111;
}
.cad-tab i {
    font: normal 12px/15px "Noto Sans", sans-serif;
    color: #777;
}
.canvas {
    position: relative;
    flex: 1;
    min-height: 0;
    background: #000;
    overflow: hidden;
}
.drawing,
.marks {
    position: absolute;
    left: 0;
    top: 0;
    width: 100%;
    height: 100%;
}
.dim {
    font: 11px "Liberation Sans", sans-serif;
    fill: #c8c8c8;
}
.lvl { fill: #00a800; }
.cap {
    font: 12px "Noto Sans CJK SC", sans-serif;
    fill: #00a800;
}
.num {
    font: 300 26px "Open Sans", sans-serif;
    fill: #008c00;
}
.num .axis { fill: #999; }
.marks text {
    font: 23px "Noto Sans CJK SC", serif;
    fill: #f00;
}
.marks .u {
    font-family: "Liberation Sans", sans-serif;
    font-weight: bold;
    font-size: 18px;
}
.tip {
    position: absolute;
    left: 431px;
    top: 2px;
    width: 190px;
    height: 19px;
    padding-left: 67px;
    background: #44597f;
    color: #fff;
    font: 10px/19px "Noto Sans CJK SC", sans-serif;
    white-space: nowrap;
    overflow: hidden;
}

/* desktop application window */
.win {
    position: absolute;
    left: 614px;
    right: 0;
    top: 2px;
    height: 377px;
    display: flex;
    flex-direction: column;
    padding-left: 4px;
    background: #b9d1ea;
    border: 1px solid #3c4c5c;
    border-bottom: 2px solid #58b4d0;
    border-right: 0;
    border-radius: 4px 0 0 0;
    font: 9px/12px "DejaVu Sans", "Noto Sans CJK SC", sans-serif;
    color: #111;
    white-space: nowrap;
    overflow: hidden;
}
.win-title {
    height: 18px;
    flex: none;
    display: flex;
    align-items: center;
    gap: 4px;
    margin-left: -4px;
    padding-left: 6px;
    background: linear-gradient(#93aece, #b6d0ec);
}
.win-menu,
.win-bar {
    flex: none;
    display: flex;
    align-items: center;
    background: #f1f1f1;
}
.win-menu {
    height: 18px;
    gap: 8px;
    padding-left: 5px;
}
.win-bar {
    height: 18px;
    gap: 6px;
}
.ib {
    display: flex;
    align-items: center;
    gap: 4px;
}
.ib em {
    font: bold 12px/12px "DejaVu Sans", sans-serif;
    margin-right: 2px;
}
.ib.off { color: #999; }
.file-tools {
    display: flex;
    align-items: center;
    gap: 7px;
    width: 114px;
    padding-left: 5px;
}
.file-tools i {
    width: 1px;
    height: 14px;
    background: #999;
}
.file-tools b {
    margin-left: auto;
}
.more2 {
    margin: 0 0 0 24px;
}
.pick {
    position: relative;
    display: flex;
    align-items: center;
}
.pick svg {
    position: absolute;
    right: 4px;
    pointer-events: none;
}
.pick select {
    appearance: none;
    font: inherit;
    color: inherit;
}
.pick .view {
    width: 47px;
    height: 15px;
    padding: 0 0 0 14px;
    border: 1px solid #aaa;
    background: #f4f4f4;
    color: #999;
}
.win-bar .cube {
    gap: 3px;
    margin-left: -2px;
}
.win-bar .cube + .cube {
    margin-left: 3px;
}
.win-body {
    flex: 1;
    min-height: 0;
    display: flex;
    gap: 4px;
    background: #ececec;
}
.navpane {
    width: 126px;
    flex: none;
    display: flex;
    flex-direction: column;
    border-right: 1px solid #aaa;
    font-family: "Liberation Sans", "Noto Sans CJK SC", sans-serif;
}
.pane-head {
    height: 12px;
    flex: none;
    background: #0a4cdc;
    color: #fff;
    display: flex;
    justify-content: space-between;
    padding-right: 3px;
    font-size: 10px;
}
.pane-head i {
    background: #2a6cf0;
    padding: 0 4px;
    margin-right: 4px;
    font-style: normal;
}
.navpane button {
    height: 15px;
    flex: none;
    padding: 0;
    border: 0;
    border-top: 1px solid #aaa;
    background: #efefef;
    font: inherit;
    color: #111;
}
.pm {
    height: 18px;
    flex: none;
    padding: 4px;
    border-top: 1px solid #aaa;
    background: #f8f8f8;
}
.tree {
    flex: 1;
    min-height: 0;
    display: grid;
    grid-auto-rows: minmax(0, 1fr);
    margin-left: 1px;
    padding: 0 0 10px;
    background: #fff;
    border: 1px solid #888;
}
.tree li {
    display: flex;
    align-items: center;
    gap: 4px;
    padding-left: 8px;
}
.tree li::before {
    content: "▷";
    width: 8px;
    font-size: 6px;
    color: #444;
}
.tree .open::before {
    content: "◢";
    font-size: 5px;
    color: #222;
}
.tree .sub {
    padding-left: 23px;
}
.tree .sub::before {
    content: "";
    width: 7px;
    border-top: 1px dotted #999;
}
.tree svg {
    width: 12px;
    height: 10px;
    margin-left: -2px;
}
.tree mark {
    background: #ececec;
    border-radius: 2px;
    padding-right: 4px;
    line-height: 10px;
    color: inherit;
}
.work {
    flex: 1;
    min-width: 0;
    display: flex;
    flex-direction: column;
}
.work-bar {
    height: 19px;
    flex: none;
    display: flex;
    align-items: center;
    gap: 5px;
    padding-left: 4px;
    background: #f4f4f4;
}
.work-bar .ib {
    gap: 3px;
}
.work-bar .bl {
    border-left: 1px solid #bbb;
    padding-left: 4px;
}
.pick .floor {
    width: 50px;
    height: 13px;
    border: 0;
    padding: 0 0 0 3px;
    background: #fff;
}
.cols {
    flex: 1;
    min-height: 0;
    display: flex;
    gap: 3px;
}
.parts {
    width: 141px;
    flex: none;
    display: flex;
    flex-direction: column;
    font-family: "Liberation Sans", "Noto Sans CJK SC", sans-serif;
}
.find {
    display: flex;
    height: 20px;
    padding-top: 4px;
}
.find input {
    width: 120px;
    border: 1px solid #bbb;
    padding: 0 2px;
    font: 9px/12px "DejaVu Sans", "Noto Sans CJK SC", sans-serif;
}
.find input::placeholder { color: #888; }
.find button { width: 20px; }
.parts-tree {
    flex: 1;
    background: #fff;
    border: 1px solid #888;
    padding-top: 1px;
}
.parts-tree li {
    height: 11px;
    display: flex;
    align-items: center;
    gap: 4px;
    padding-left: 7px;
}
.parts-tree li:first-child::before {
    content: "◢";
    width: 7px;
    font-size: 5px;
    color: #28b0e0;
}
.parts-tree .sel {
    width: 89px;
    margin-left: 31px;
    padding-left: 3px;
    gap: 5px;
    background: #2a62c4;
    color: #000;
}
.props {
    flex: 1;
    min-width: 0;
    display: flex;
    flex-direction: column;
    border-left: 1px solid #888;
}
.props-tab {
    height: 15px;
    background: #fff;
    border-bottom: 1px solid #999;
}
.props-tab span {
    display: inline-block;
    height: 15px;
    padding: 1px 6px 0 4px;
    background: #f4f4f4;
    border-right: 1px solid #888;
    border-top: 1px solid #888;
}
.props-body {
    flex: 1;
    background: #fff;
    margin: 2px 0 2px 1px;
    border-top: 1px solid #bbb;
    border-left: 1px solid #999;
    border-bottom: 1px solid #999;
}
.props table {
    width: 283px;
    height: 180px;
    table-layout: fixed;
    border-collapse: collapse;
    font: 9px/10px "Liberation Sans", "Noto Sans CJK SC", sans-serif;
}
.props th {
    height: 15px;
    padding: 0;
    font-weight: normal;
    background: #f2f2f2;
    border: 1px solid #ccc;
}
.props .n { width: 17px; }
.props .k { width: 145px; }
.props .v {
    width: 97px;
    background: #f4c878;
    color: #8a1450;
}
.props .c { width: 24px; }
.props td {
    padding: 0 0 0 2px;
    border: 1px solid #ccc;
}
.props td:first-child {
    background: #f0f0f0;
    padding: 0;
    text-align: center;
    color: #333;
}
.props td:nth-child(2) {
    padding-left: 14px;
}
.props td:last-child {
    padding: 0;
    text-align: center;
}
.props .blue td:nth-child(2) { color: #1010f0; }
.props .cur td:first-child { background: #fbc678; }
.props .cur td:nth-child(2) {
    background: #3399ff;
    color: #fff;
}
.props .cur td:nth-child(3) { background: #e0efff; }
.props .grp td:nth-child(2) {
    color: #999;
    padding-left: 1px;
}
.props .grp i {
    display: inline-block;
    width: 9px;
    height: 9px;
    margin-right: 4px;
    border: 1px solid #bbb;
    background: #eee;
    color: #222;
    font: bold 9px/7px "DejaVu Sans", sans-serif;
    text-align: center;
}
.props input {
    appearance: none;
    display: block;
    width: 10px;
    height: 9px;
    margin: 0 auto;
    border: 1px solid #aaa;
    background: #e4e4e4;
}
.win-status {
    height: 17px;
    flex: none;
    display: flex;
    align-items: center;
    background: #f0f0f0;
    border-bottom: 2px solid #b9d1ea;
    font-family: "Liberation Sans", "Noto Sans CJK SC", sans-serif;
}
.win-status span {
    padding-left: 3px;
    border-left: 1px solid #ddd;
}
.win-status .s1 { width: 112px; }
.win-status .s2 { width: 61px; }
.win-status .s3 { width: 76px; }
.win-status .s4 { width: 38px; }

.under {
    height: 10px;
    flex: none;
    overflow: hidden;
    display: flex;
    justify-content: flex-end;
    padding-right: 174px;
    font-size: 16px;
    line-height: 16px;
    color: #222;
}
.promo {
    position: absolute;
    right: 0;
    bottom: 10px;
    width: 112px;
    height: 5px;
    background: #b378d8;
    border-top: 2px solid #e4c8f4;
    border-radius: 10px 0 0 0;
}
.close {
    position: absolute;
    right: 0;
    top: 28px;
    width: 36px;
    height: 36px;
    padding: 9px;
    border: 0;
    border-radius: 50%;
    background: #36393b;
}
.close svg {
    display: block;
}
.float {
    position: absolute;
    right: 22px;
    top: 269px;
    display: grid;
    gap: 11px;
}
.float a {
    width: 44px;
    height: 44px;
    background: #ff6600;
    color: #fff;
    font-size: 15px;
    line-height: 19px;
    text-align: center;
}
.float .up {
    background: #c0c0c0;
    padding-top: 12px;
}

/* scroll bars */
.vbar,
.hbar {
    display: flex;
    align-items: center;
    background: #f0f0f0;
}
.vbar {
    flex-direction: column;
}
.vbar b {
    width: 13px;
    height: 103px;
    margin-top: 41px;
    background: #c1c1c1;
}
.hbar b {
    flex: 1;
    height: 13px;
    margin: 0 49px 0 7px;
    background: #c1c1c1;
}
.a {
    border: 4px solid transparent;
}
.a.up {
    border-top: 0;
    border-bottom-color: #505050;
    margin-top: 7px;
}
.a.down {
    border-bottom: 0;
    border-top-color: #505050;
    margin: auto 0 7px;
}
.a.left {
    border-left: 0;
    border-right-color: #999;
    margin-left: 6px;
}
.a.right {
    border-right: 0;
    border-left-color: #505050;
    margin-right: 6px;
}
.corner {
    background: #dcdcdc;
}

/* browser status line */
.status {
    height: 24px;
    flex: none;
    display: flex;
    align-items: center;
    padding: 0 5px 0 10px;
    border-top: 1px solid #c4c4c4;
    background: #fff;
    color: #666;
    white-space: nowrap;
}
.today {
    margin: 0 30px 0 9px;
}
.dbl {
    margin-right: 6px;
}
.status a {
    color: #333;
    text-decoration: underline;
}
.st-right {
    margin-left: auto;
    display: flex;
    align-items: center;
}
.st-right .g {
    gap: 8px;
    margin-right: 11px;
}
.st-right .g:nth-child(2) {
    margin-right: 12px;
}
.st-right .k {
    gap: 10px;
    width: 36px;
    justify-content: flex-start;
}
.st-right .dl {
    width: 59px;
}
.st-right .z {
    width: auto;
}

/* windows task bar */
.taskbar {
    height: 40px;
    flex: none;
    display: flex;
    background: #04161a;
    color: #fff;
}
.start {
    width: 48px;
    background: #0a0a0a;
}
.cortana {
    width: 344px;
    display: flex;
    align-items: center;
    padding: 0 15px 0 10px;
    background: #f2f2f2;
}
.cortana i {
    width: 20px;
    height: 20px;
    border: 3px solid #111;
    border-radius: 50%;
}
.cortana input,
.iesearch input {
    flex: 1;
    min-width: 0;
    border: 0;
    padding: 0 0 0 10px;
    background: none;
    font: 14px/20px "Noto Sans", "Noto Sans CJK SC", sans-serif;
}
.cortana input::placeholder { color: #333; }
.t48 { width: 48px; }
.t52 { width: 52px; }
.t50 { width: 50px; }
.t36 { width: 36px; }
.t42 { width: 42px; }
.iesearch {
    width: 150px;
    height: 30px;
    margin: 5px 0;
    display: flex;
    align-items: center;
    padding: 0 7px 0 3px;
    background: #4a4a4a;
    border: 1px solid #777;
    color: #999;
}
.iesearch input {
    padding-left: 4px;
    font-size: 12px;
}
.iesearch input::placeholder { color: #a0a0a0; }
.ieb { color: #2e96f0; }
.ie { color: #4ab4f0; }
.edge { color: #0a7ad8; }
.run {
    margin-right: 4px;
    margin-left: -3px;
    border-bottom: 2px solid #76b9ed;
}
.act {
    background: #3c4a4e;
    border-bottom: 2px solid #76b9ed;
}
.tscroll {
    width: 17px;
    margin-left: 1px;
    padding: 7px 4px;
    display: flex;
    flex-direction: column;
    justify-content: space-between;
    background: #f0f0f0;
    color: #333;
}
.tscroll svg:first-child,
.rise {
    transform: rotate(180deg);
}
.tray {
    flex: 1;
    display: flex;
    align-items: center;
    justify-content: flex-end;
    gap: 10px;
    padding-right: 17px;
}
.people {
    margin-right: 12px;
}
.two {
    font-size: 12px;
    line-height: 17px;
    text-align: center;
}
.cpu {
    width: 68px;
}
.clock {
    width: 70px;
}
.ime {
    font-size: 14px;
}
.note {
    position: relative;
}
.note span {
    position: absolute;
    left: 14px;
    top: 7px;
}
```
